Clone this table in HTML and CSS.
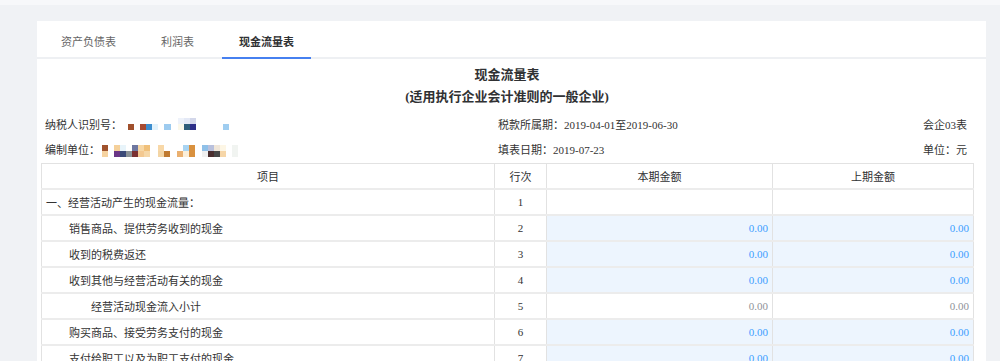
FILE: index.html
```html
<!DOCTYPE html>
<html lang="zh-CN">
<head>
<meta charset="utf-8">
<title>现金流量表</title>
<link rel="stylesheet" href="styles.css">
</head>
<body>
<div class="topbar"></div>
<div class="card">
  <div class="tabs">
    <div class="tab">资产负债表</div>
    <div class="tab">利润表</div>
    <div class="tab active">现金流量表</div>
  </div>
  <div class="report">
    <div class="title">现金流量表</div>
    <div class="subtitle">(适用执行企业会计准则的一般企业)</div>
    <div class="info">
      <div class="cell-left">纳税人识别号：<svg class="mosaic" width="110" height="16" viewBox="0 0 110 16">
          <rect x="56" y="0" width="6" height="6" fill="#eef2fa"/>
          <rect x="62" y="0" width="6" height="6" fill="#e4e9f6"/>
          <rect x="68" y="0" width="6" height="6" fill="#d3d7ea"/>
          <rect x="6" y="6" width="6" height="6" fill="#a0502c"/>
          <rect x="18" y="6" width="6" height="6" fill="#a84a30"/>
          <rect x="24" y="6" width="6" height="6" fill="#3d8ecf"/>
          <rect x="30" y="6" width="6" height="6" fill="#e3f2fb"/>
          <rect x="42" y="6" width="7" height="6" fill="#9dcbef"/>
          <rect x="56" y="6" width="6" height="6" fill="#fbf8ea"/>
          <rect x="62" y="6" width="6" height="6" fill="#2e5d7a"/>
          <rect x="68" y="6" width="6" height="6" fill="#2d2f88"/>
          <rect x="101" y="6" width="6" height="6" fill="#9fcdf0"/>
        </svg></div>
      <div class="cell-mid">税款所属期：2019-04-01至2019-06-30</div>
      <div class="cell-right">会企03表</div>
      <div class="cell-left">编制单位：<svg class="mosaic" width="140" height="14" viewBox="0 0 140 14">
          <rect x="2" y="1" width="6" height="6" fill="#a0522d"/>
          <rect x="2" y="7" width="6" height="6" fill="#f6d3a0"/>
          <rect x="14" y="1" width="6" height="6" fill="#f5d09a"/>
          <rect x="14" y="7" width="6" height="6" fill="#6a3585"/>
          <rect x="20" y="1" width="6" height="6" fill="#e8f4fa"/>
          <rect x="20" y="7" width="6" height="6" fill="#3b4a78"/>
          <rect x="26" y="7" width="6" height="6" fill="#8a9296"/>
          <rect x="32" y="1" width="6" height="6" fill="#6e77a0"/>
          <rect x="32" y="7" width="6" height="6" fill="#7a2f30"/>
          <rect x="38" y="1" width="6" height="6" fill="#f7d7a5"/>
          <rect x="38" y="7" width="6" height="6" fill="#f3c890"/>
          <rect x="44" y="1" width="6" height="6" fill="#f0c07a"/>
          <rect x="44" y="7" width="6" height="6" fill="#f5d7a8"/>
          <rect x="58" y="1" width="6" height="6" fill="#f8d8a8"/>
          <rect x="58" y="7" width="6" height="6" fill="#f3d5a5"/>
          <rect x="64" y="7" width="6" height="6" fill="#c07a30"/>
          <rect x="77" y="7" width="6" height="6" fill="#eab070"/>
          <rect x="83" y="1" width="6" height="6" fill="#a8d4f2"/>
          <rect x="83" y="7" width="6" height="6" fill="#fbeed8"/>
          <rect x="89" y="1" width="6" height="12" fill="#d9913f"/>
          <rect x="102" y="1" width="6" height="6" fill="#8fc0e8"/>
          <rect x="102" y="7" width="6" height="6" fill="#f0f0f0"/>
          <rect x="108" y="1" width="6" height="6" fill="#b9c0dc"/>
          <rect x="108" y="7" width="6" height="6" fill="#4a2e2e"/>
          <rect x="114" y="1" width="6" height="6" fill="#f0e6d8"/>
          <rect x="114" y="7" width="6" height="6" fill="#474747"/>
          <rect x="120" y="1" width="6" height="6" fill="#fdf6e5"/>
          <rect x="120" y="7" width="6" height="6" fill="#f6d6a8"/>
          <rect x="132" y="1" width="6" height="12" fill="#f1f4f1"/>
        </svg></div>
      <div class="cell-mid">填表日期：2019-07-23</div>
      <div class="cell-right">单位：元</div>
    </div>
    <table class="sheet">
      <colgroup>
        <col class="c-item"><col class="c-no"><col class="c-cur"><col class="c-prev">
      </colgroup>
      <thead>
        <tr><th>项目</th><th>行次</th><th>本期金额</th><th>上期金额</th></tr>
      </thead>
      <tbody>
        <tr><td class="item">一、经营活动产生的现金流量：</td><td class="no">1</td><td></td><td></td></tr>
        <tr><td class="item lv1">销售商品、提供劳务收到的现金</td><td class="no">2</td><td class="amt edit">0.00</td><td class="amt edit">0.00</td></tr>
        <tr><td class="item lv1">收到的税费返还</td><td class="no">3</td><td class="amt edit">0.00</td><td class="amt edit">0.00</td></tr>
        <tr><td class="item lv1">收到其他与经营活动有关的现金</td><td class="no">4</td><td class="amt edit">0.00</td><td class="amt edit">0.00</td></tr>
        <tr><td class="item lv2">经营活动现金流入小计</td><td class="no">5</td><td class="amt calc">0.00</td><td class="amt calc">0.00</td></tr>
        <tr><td class="item lv1">购买商品、接受劳务支付的现金</td><td class="no">6</td><td class="amt edit">0.00</td><td class="amt edit">0.00</td></tr>
        <tr><td class="item lv1">支付给职工以及为职工支付的现金</td><td class="no">7</td><td class="amt edit">0.00</td><td class="amt edit">0.00</td></tr>
        <tr><td class="item lv1">支付的各项税费</td><td class="no">8</td><td class="amt edit">0.00</td><td class="amt edit">0.00</td></tr>
      </tbody>
    </table>
  </div>
</div>
</body>
</html>
```
FILE: styles.css
```css
html, body {
  margin: 0;
  height: 100%;
  overflow: hidden;
}
body {
  background: #f0f2f5;
  font-family: "Liberation Serif", "Noto Sans CJK SC", serif;
  font-size: 11px;
  color: #333;
}
.topbar {
  height: 5px;
  background: #f7f8fa;
}
.card {
  margin: 16px 14px 0 37px;
  background: #fff;
  height: 400px;
}
.tabs {
  display: flex;
  gap: 11px;
  padding-left: 7px;
  height: 36px;
  border-bottom: 2px solid #eef0f3;
}
.tab {
  box-sizing: border-box;
  height: 38px;
  padding: 3px 17px 0;
  display: flex;
  align-items: center;
  color: #666;
  border-bottom: 2px solid transparent;
}
.tab.active {
  color: #303133;
  font-weight: bold;
  border-bottom-color: #4680f0;
}
.report {
  padding: 5px 13px 0 4px;
}
.title,
.subtitle {
  text-align: center;
  font-size: 13px;
  font-weight: bold;
  line-height: 22px;
  color: #303133;
}
.subtitle {
  margin-bottom: 5px;
}
.info {
  display: grid;
  grid-template-columns: 453px 1fr auto;
  line-height: 25px;
}
.cell-left {
  padding-left: 4px;
  display: flex;
  align-items: center;
}
.cell-mid {
  padding-left: 4px;
}
.cell-right {
  padding-right: 6px;
  text-align: right;
}
.mosaic {
  display: block;
}
.sheet {
  width: 932px;
  table-layout: fixed;
  border-collapse: collapse;
}
.c-item { width: 453px; }
.c-no { width: 52px; }
.c-cur { width: 226px; }
.c-prev { width: 201px; }
.sheet th,
.sheet td {
  height: 24px;
  padding: 0 4px;
  border-left: 1px solid #e2e2e2;
  border-right: 1px solid #e2e2e2;
  border-top: 2px solid #ececec;
  border-bottom: 2px solid #ececec;
  white-space: nowrap;
  overflow: hidden;
}
.sheet thead th {
  border-top: 1px solid #e2e2e2;
  font-weight: normal;
  text-align: center;
  color: #303133;
}
.sheet .no {
  text-align: center;
}
.sheet .lv1 {
  padding-left: 27px;
}
.sheet .lv2 {
  padding-left: 49px;
}
.sheet .amt {
  text-align: right;
}
.sheet .edit {
  background: #edf5fe;
  color: #409eff;
}
.sheet .calc {
  color: #909399;
}
```
